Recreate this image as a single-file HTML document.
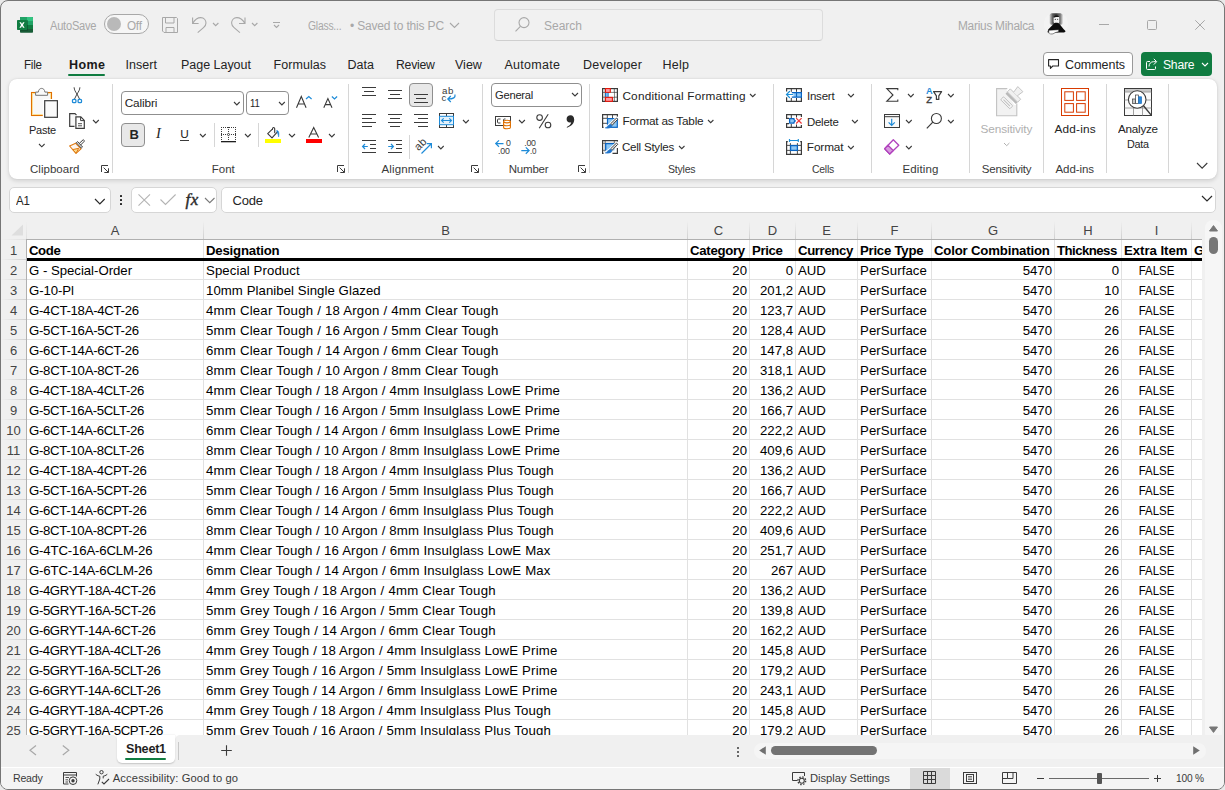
<!DOCTYPE html>
<html lang="en"><head><meta charset="utf-8"><title>Glass - Excel</title>
<style>
*{box-sizing:border-box;margin:0;padding:0}
html,body{width:1225px;height:790px;overflow:hidden;background:#e9e9e9}
body{font-family:"Liberation Sans",sans-serif;font-size:12px;color:#242424}
#win{position:absolute;left:0;top:0;width:1225px;height:790px;background:#f0f0f0;border:1px solid #767676;border-radius:8px;overflow:hidden}
#win>*{position:absolute}
.abs{position:absolute}
svg{position:absolute;overflow:visible}
.t{position:absolute;white-space:nowrap;line-height:1}
/* grid */
#grid{left:-1px;top:-1px;width:1225px;height:736px;overflow:hidden;pointer-events:none}
#grid>*{position:absolute}
#gridbg{left:26px;top:239px;width:1177px;height:496px;background:#fff}
.ch{top:221px;height:18px;line-height:19px;text-align:center;font-size:13px;color:#444}
.rh{left:1px;width:25px;height:19px;line-height:22px;text-align:center;font-size:13px;color:#444}
.vl{top:240px;width:1px;height:495px;background:#e1e1e1}
.vh{top:221px;width:1px;height:18px;background:linear-gradient(to bottom,rgba(208,208,208,0),#d0d0d0)}
.hl{left:27px;width:1175px;height:1px;background:#e1e1e1}
.hh{left:1px;width:25px;height:1px;background:linear-gradient(to right,rgba(208,208,208,0),#d0d0d0)}
.c{height:19px;line-height:22px;font-size:13.2px;color:#000;white-space:nowrap;overflow:hidden;padding:0 2px}
.c.ar{text-align:right}.c.ac{text-align:center}
.c.b{font-weight:bold;letter-spacing:-0.12px}
.k5{letter-spacing:0.1px}
.k8 span{display:inline-block;transform:scaleX(.87)}
#thick{left:27px;top:258px;width:1175px;height:3px;background:#000}
</style></head><body><div id="win">

<div class="abs" style="left:26px;top:239px;width:1175px;height:496px;background:#fff"></div>
<svg style="left:16px;top:16px" width="16" height="16">
<rect x="3" y="0" width="13" height="15.800" rx="0.800" fill="#185c37"/>
<path d="M3.800 0 H10 V4 H3 V0.800 A0.800 0.800 0 0 1 3.800 0 Z" fill="#21a366"/><path d="M10 0 H15.200 A0.800 0.800 0 0 1 16 0.800 V4 H10 Z" fill="#33c481"/>
<rect x="3" y="4" width="7" height="4" fill="#107c41"/><rect x="10" y="4" width="6" height="4" fill="#21a366"/>
<rect x="3" y="8" width="7" height="4" fill="#185c37"/><rect x="10" y="8" width="6" height="4" fill="#107c41"/>
<rect x="10" y="3" width="1" height="10.500" fill="#0b3f24" opacity="0.450"/><rect x="3.500" y="13" width="7" height="0.800" fill="#0b3f24" opacity="0.450"/>
<rect x="0" y="3" width="10" height="10" rx="0.800" fill="#107c41"/>
<path d="M2.400 5.200 L4 5.200 L5 7.100 L6 5.200 L7.600 5.200 L5.900 8 L7.600 10.800 L6 10.800 L5 8.900 L4 10.800 L2.400 10.800 L4.100 8 Z" fill="#fff"/>
</svg>
<div class="t" style="left:48.50px;top:14.84px;font-size:12px;line-height:20px;color:#a8a8a8;letter-spacing:-0.250px;transform:scaleX(0.9254);transform-origin:0 0;">AutoSave</div>
<div class="abs" style="left:103px;top:13px;width:45px;height:20px;border:1px solid #a8a8a8;border-radius:10px;background:#f6f6f6"></div>
<div class="abs" style="left:106px;top:16px;width:14px;height:14px;border-radius:7px;background:#b9b9b9"></div>
<div class="t" style="left:126.00px;top:14.84px;font-size:12px;line-height:20px;color:#a8a8a8;letter-spacing:-0.250px;transform:scaleX(0.9756);transform-origin:0 0;">Off</div>
<svg style="left:161px;top:16px" width="16" height="16"><path d="M0.500 0.500 H14.500 L15.500 1.500 V15.500 H2 L0.500 14 Z M3.500 0.500 V6 H12 V0.500 M4 15.500 V10.500 H12 V15.500" fill="none" stroke="#a8a8a8" stroke-width="1"/></svg>
<svg style="left:191px;top:16px" width="15" height="16"><path d="M0.600 0.500 V6.500 H6.600 M0.800 6.300 C3 2.500 6 0.600 8.800 0.600 C12 0.600 14 3.200 14 6 C14 8 13 9.300 11.500 10.600 L5.700 15.600" fill="none" stroke="#a8a8a8" stroke-width="1.100"/></svg>
<svg style="left:212.0px;top:21.8px" width="5.4" height="2.7"><path d="M0 0 L2.70 2.70 L5.40 0" fill="none" stroke="#a8a8a8" stroke-width="1.15"/></svg>
<svg style="left:230px;top:16px" width="15" height="16"><path d="M14 0.500 V6.500 H8 M13.800 6.300 C11.600 2.500 8.600 0.600 5.800 0.600 C2.600 0.600 0.600 3.200 0.600 6 C0.600 8 1.600 9.300 3.100 10.600 L8.900 15.600" fill="none" stroke="#a8a8a8" stroke-width="1.100"/></svg>
<svg style="left:251.0px;top:21.9px" width="5.4" height="2.7"><path d="M0 0 L2.70 2.70 L5.40 0" fill="none" stroke="#a8a8a8" stroke-width="1.15"/></svg>
<svg style="left:272px;top:21px" width="7" height="6"><path d="M0 0.500 H7" stroke="#a8a8a8" stroke-width="1"/><path d="M1 3 L3.500 5.500 L6 3" fill="none" stroke="#a8a8a8" stroke-width="1.100"/></svg>
<div class="t" style="left:306.50px;top:14.84px;font-size:12px;line-height:20px;color:#a8a8a8;letter-spacing:-0.250px;transform:scaleX(0.8617);transform-origin:0 0;">Glass...</div>
<div class="t" style="left:349.00px;top:14.84px;font-size:12px;line-height:20px;color:#a8a8a8;letter-spacing:-0.169px;">• Saved to this PC</div>
<svg style="left:449.0px;top:22.2px" width="9.0" height="4.5"><path d="M0 0 L4.50 4.50 L9.00 0" fill="none" stroke="#a8a8a8" stroke-width="1.1"/></svg>
<div class="abs" style="left:493px;top:8px;width:329px;height:32px;border:1px solid #dcdcdc;border-bottom-color:#cfcfcf;border-radius:4px;background:#f1f1f1"></div>
<svg style="left:514px;top:16px" width="15" height="15"><circle cx="9" cy="5.600" r="5" fill="none" stroke="#a8a8a8" stroke-width="1.100"/><path d="M5.400 9.300 L0.500 14.300" stroke="#a8a8a8" stroke-width="1.100"/></svg>
<div class="t" style="left:543.00px;top:14.84px;font-size:12px;line-height:20px;color:#a8a8a8;letter-spacing:0.000px;">Search</div>
<div class="t" style="left:957.00px;top:14.84px;font-size:12px;line-height:20px;color:#a8a8a8;letter-spacing:-0.250px;transform:scaleX(0.9871);transform-origin:0 0;">Marius Mihalca</div>
<svg style="left:1043px;top:11px" width="24" height="24"><defs><clipPath id="av"><circle cx="12" cy="12" r="12"/></clipPath>
<linearGradient id="avg" x1="0" x2="1" y1="0" y2="0"><stop offset="0" stop-color="#d8d8d8"/><stop offset="0.25" stop-color="#555"/><stop offset="0.5" stop-color="#3a3a3a"/><stop offset="0.8" stop-color="#777"/><stop offset="1" stop-color="#e0e0e0"/></linearGradient></defs>
<g clip-path="url(#av)"><rect width="24" height="24" fill="#f3f3f3"/>
<rect x="5.500" y="1.300" width="13.400" height="11.500" rx="2" fill="url(#avg)"/>
<rect x="9.600" y="4.200" width="5.600" height="7" rx="1.500" fill="#f2f2f2"/><path d="M9.600 5.800 C9.600 4 11 3.600 12.600 3.600 C14 3.600 15 4.200 15 5 L12 5 Z" fill="#111"/>
<circle cx="11.300" cy="7.300" r="0.650" fill="#333"/><circle cx="13.600" cy="7.300" r="0.600" fill="#555"/>
<path d="M9.500 12 L11 10.800 H13.500 L15.500 12 L19.500 17 L22.200 19.800 V20.600 H3.400 L4.200 17.500 Z" fill="#0c0c0c"/>
<path d="M4.600 18.300 L14.600 17.700 L14.800 19.600 L11 20.700 L9 21.900 L5 22.100 Z" fill="#fff" stroke="#111" stroke-width="0.500"/></g></svg>
<svg style="left:1098px;top:23px" width="10" height="1"><rect width="10" height="1" fill="#a8a8a8"/></svg>
<svg style="left:1146px;top:19px" width="10" height="10"><rect x="0.5" y="0.5" width="9" height="9" rx="1" fill="none" stroke="#a8a8a8" stroke-width="1"/></svg>
<svg style="left:1194px;top:19px" width="10" height="10"><path d="M0.3 0.3 L9.7 9.7 M9.7 0.3 L0.3 9.7" stroke="#a8a8a8" stroke-width="1"/></svg>
<div class="t" style="left:22.50px;top:54.17px;font-size:12.5px;line-height:20px;color:#242424;letter-spacing:-0.250px;transform:scaleX(0.9290);transform-origin:0 0;">File</div>
<div class="t" style="left:124.50px;top:54.17px;font-size:12.5px;line-height:20px;color:#242424;letter-spacing:0.050px;">Insert</div>
<div class="t" style="left:180.00px;top:54.17px;font-size:12.5px;line-height:20px;color:#242424;letter-spacing:-0.025px;">Page Layout</div>
<div class="t" style="left:272.50px;top:54.17px;font-size:12.5px;line-height:20px;color:#242424;letter-spacing:0.054px;">Formulas</div>
<div class="t" style="left:346.50px;top:54.17px;font-size:12.5px;line-height:20px;color:#242424;letter-spacing:0.000px;">Data</div>
<div class="t" style="left:395.00px;top:54.17px;font-size:12.5px;line-height:20px;color:#242424;letter-spacing:-0.250px;transform:scaleX(0.9781);transform-origin:0 0;">Review</div>
<div class="t" style="left:454.00px;top:54.17px;font-size:12.5px;line-height:20px;color:#242424;letter-spacing:0.000px;">View</div>
<div class="t" style="left:503.50px;top:54.17px;font-size:12.5px;line-height:20px;color:#242424;letter-spacing:0.286px;">Automate</div>
<div class="t" style="left:582.00px;top:54.17px;font-size:12.5px;line-height:20px;color:#242424;letter-spacing:0.250px;">Developer</div>
<div class="t" style="left:661.50px;top:54.17px;font-size:12.5px;line-height:20px;color:#242424;letter-spacing:0.250px;">Help</div>
<div class="t" style="left:68.00px;top:54.17px;font-size:12.5px;line-height:20px;color:#1a1a1a;letter-spacing:0.417px;font-weight:bold;">Home</div>
<div class="abs" style="left:67px;top:73px;width:37px;height:2px;background:#107c41;border-radius:1px"></div>
<div class="abs" style="left:1042px;top:51px;width:90px;height:24px;border:1px solid #999;border-radius:4px;background:#fff"></div>
<svg style="left:1047px;top:57px" width="11" height="11"><path d="M0.600 1.600 H10.500 V8 H4.800 L2.400 10.300 V8 H0.600 Z" fill="none" stroke="#242424" stroke-width="1.100" stroke-linejoin="round"/></svg>
<div class="t" style="left:1064.00px;top:53.87px;font-size:12.5px;line-height:20px;color:#242424;letter-spacing:-0.054px;">Comments</div>
<div class="abs" style="left:1140px;top:51px;width:71px;height:24px;border-radius:4px;background:#107c41"></div>
<svg style="left:1145px;top:57px" width="11" height="12"><path d="M4 3.5 H1.5 A1 1 0 0 0 0.5 4.5 V10.5 A1 1 0 0 0 1.5 11.5 H8.5 A1 1 0 0 0 9.5 10.5 V8.5" fill="none" stroke="#fff" stroke-width="1"/><path d="M3 8.5 C3 5.5 5 3.7 7.5 3.7 H10 M7.8 0.8 L10.7 3.7 L7.8 6.6" fill="none" stroke="#fff" stroke-width="1"/></svg>
<div class="t" style="left:1161.50px;top:53.87px;font-size:12.5px;line-height:20px;color:#fff;letter-spacing:-0.250px;transform:scaleX(0.9730);transform-origin:0 0;">Share</div>
<svg style="left:1201.0px;top:62.0px" width="6.0" height="3.0"><path d="M0 0 L3.00 3.00 L6.00 0" fill="none" stroke="#fff" stroke-width="1.1"/></svg>
<div class="abs" style="left:8px;top:78px;width:1207.5px;height:100px;background:#fff;border-radius:8px;box-shadow:0 1.5px 4px rgba(0,0,0,.13),0 0 1.5px rgba(0,0,0,.10)"></div>
<svg style="left:30px;top:87px" width="27" height="30">
<rect x="0.500" y="4.500" width="20" height="23" fill="#f8f8f8" stroke="#e07000" stroke-width="1.100"/>
<rect x="1.500" y="5.500" width="18" height="21" fill="none" stroke="#fbe09a" stroke-width="1"/>
<rect x="11.800" y="11" width="16" height="19" fill="#fff"/>
<path d="M4.600 7.300 V4.100 H7.300 C7.600 1.500 9 0.400 10.600 0.400 C12.200 0.400 13.600 1.500 13.900 4.100 H16.600 V7.300 Z" fill="#fafafa" stroke="#757575" stroke-width="1"/>
<rect x="13.700" y="12.700" width="12.700" height="16.600" fill="#fafafa" stroke="#3b3b3b" stroke-width="1.200"/>
</svg>
<div class="t" style="left:27.80px;top:118.91px;font-size:11.8px;line-height:20px;color:#242424;letter-spacing:-0.250px;transform:scaleX(0.9339);transform-origin:0 0;">Paste</div>
<svg style="left:38.0px;top:143.1px" width="5.6" height="2.8"><path d="M0 0 L2.80 2.80 L5.60 0" fill="none" stroke="#3b3b3b" stroke-width="1.1"/></svg>
<svg style="left:71px;top:86px" width="11" height="16"><path d="M2.100 0.300 C2.300 3 3.300 4.500 5 7 L7.500 12 M7.900 0.300 C7.700 3 6.700 4.500 5 7 L2.500 12" stroke="#3b3b3b" stroke-width="0.950" fill="none"/>
<rect x="0.500" y="12.300" width="3.400" height="3.400" rx="1" fill="#fff" stroke="#1e8bd8" stroke-width="1.300"/><rect x="6.100" y="12.300" width="3.400" height="3.400" rx="1" fill="#fff" stroke="#1e8bd8" stroke-width="1.300"/></svg>
<svg style="left:68px;top:112px" width="17" height="17"><path d="M5.500 13.300 H0.700 V0.700 H6 L7.500 2.200" fill="#f8f8f8" stroke="#3b3b3b" stroke-width="1.200"/>
<path d="M6.900 3.900 H11.800 L15.300 7.400 V15.300 H6.900 Z" fill="#fff" stroke="#3b3b3b" stroke-width="1.200"/>
<path d="M11.600 4.100 V7.600 H15.100" fill="none" stroke="#3b3b3b" stroke-width="1"/><path d="M9 10.700 H13 M9 12.800 H13" fill="none" stroke="#3b3b3b" stroke-width="0.900"/></svg>
<svg style="left:91.7px;top:119.0px" width="5.8" height="2.9"><path d="M0 0 L2.90 2.90 L5.80 0" fill="none" stroke="#3b3b3b" stroke-width="1.1"/></svg>
<svg style="left:68px;top:138px" width="17" height="15"><path d="M0.600 7 L6.700 4.300 L12 9.800 L7 14.400 Z" fill="#fdf5ee" stroke="#e07a10" stroke-width="1.100" stroke-linejoin="round"/>
<path d="M3.600 10.600 L9.800 9.300 L7 14.200 Z" fill="#fbd98a" stroke="#e07a10" stroke-width="1" stroke-linejoin="round"/>
<path d="M7.300 3.700 L8.600 2.600 L13.500 8 L12.300 9.100 Z" fill="#fff" stroke="#3b3b3b" stroke-width="1" stroke-linejoin="round"/>
<path d="M10.300 4.400 L14.200 0.700 L15.600 2 L11.700 5.900 Z" fill="#fff" stroke="#3b3b3b" stroke-width="1" stroke-linejoin="round"/></svg>
<div class="t" style="left:29.00px;top:157.52px;font-size:11.5px;line-height:20px;color:#3a3a3a;letter-spacing:0.031px;">Clipboard</div>
<svg style="left:100px;top:164px" width="8" height="8"><path d="M7 0.500 H0.500 V7 M2.600 2.600 L7.300 7.300 M7.500 3.300 V7.500 H3.300" fill="none" stroke="#3b3b3b" stroke-width="1"/></svg>
<div class="abs" style="left:111px;top:83px;width:1px;height:89px;background:#d6d6d6"></div>
<div class="abs" style="left:120px;top:90px;width:123px;height:24px;border:1px solid #8f8f8f;border-radius:4px;background:#fff"></div>
<div class="t" style="left:123.70px;top:91.91px;font-size:11.8px;line-height:20px;color:#242424;letter-spacing:-0.117px;">Calibri</div>
<svg style="left:233.3px;top:100.8px" width="5.7" height="2.8"><path d="M0 0 L2.85 2.85 L5.70 0" fill="none" stroke="#3b3b3b" stroke-width="1.1"/></svg>
<div class="abs" style="left:245px;top:90px;width:43px;height:24px;border:1px solid #8f8f8f;border-radius:4px;background:#fff"></div>
<div class="t" style="left:249.30px;top:91.91px;font-size:11.8px;line-height:20px;color:#242424;letter-spacing:-0.250px;transform:scaleX(0.8083);transform-origin:0 0;">11</div>
<svg style="left:278.4px;top:100.8px" width="5.8" height="2.9"><path d="M0 0 L2.90 2.90 L5.80 0" fill="none" stroke="#3b3b3b" stroke-width="1.1"/></svg>
<svg style="left:295px;top:95px" width="16" height="12"><path d="M0.500 11.800 L5.300 0.500 L10.100 11.800 M2.200 8 H8.400" fill="none" stroke="#3b3b3b" stroke-width="1.100"/><path d="M10 3 L12.800 0.500 L15.600 3" fill="none" stroke="#1e8bd8" stroke-width="1.200"/></svg>
<svg style="left:322px;top:95px" width="15" height="12"><path d="M0.800 11.800 L4.900 2.600 L9 11.800 M2.300 8.600 H7.500" fill="none" stroke="#3b3b3b" stroke-width="1.100"/><path d="M8.900 0.500 L11.500 3 L14.100 0.500" fill="none" stroke="#1e8bd8" stroke-width="1.200"/></svg>
<div class="abs" style="left:120px;top:122px;width:24px;height:24px;border:1px solid #8f8f8f;border-radius:4px;background:#e8e8e8"></div>
<div class="t" style="left:128.60px;top:123.50px;font-size:13px;line-height:20px;color:#242424;letter-spacing:0.000px;font-weight:bold;">B</div>
<div class="t" style="left:155px;top:122.3px;font-family:'Liberation Serif',serif;font-style:italic;font-size:14.5px;line-height:20px;color:#242424">I</div>
<div class="t" style="left:179.30px;top:122.51px;font-size:11.8px;line-height:20px;color:#242424;letter-spacing:0.000px;">U</div>
<div class="abs" style="left:179px;top:139px;width:9px;height:1px;background:#3b3b3b"></div>
<svg style="left:199.4px;top:132.8px" width="5.7" height="2.8"><path d="M0 0 L2.85 2.85 L5.70 0" fill="none" stroke="#3b3b3b" stroke-width="1.1"/></svg>
<div class="abs" style="left:213px;top:122px;width:1px;height:24px;background:#d6d6d6"></div>
<svg style="left:220px;top:126px" width="15" height="16"><path d="M0 0.500 H15 M0 7.500 H15 M0.500 0 V14 M7.500 0 V14 M14.500 0 V14" fill="none" stroke="#3b3b3b" stroke-width="1" stroke-dasharray="1 1"/>
<circle cx="7.500" cy="7.500" r="1.100" fill="#fff" stroke="#3b3b3b" stroke-width="0.700"/>
<rect x="0" y="14" width="15" height="1.300" fill="#1f1f1f"/></svg>
<svg style="left:243.5px;top:132.8px" width="5.7" height="2.8"><path d="M0 0 L2.85 2.85 L5.70 0" fill="none" stroke="#3b3b3b" stroke-width="1.1"/></svg>
<div class="abs" style="left:257px;top:122px;width:1px;height:24px;background:#d6d6d6"></div>
<svg style="left:265px;top:126px" width="15" height="12"><path d="M6.400 2.200 L1.700 6.600 L6 10.800 L11 5.400" fill="#fafafa" stroke="#3b3b3b" stroke-width="1.150" stroke-linejoin="round" stroke-linecap="round"/>
<path d="M6.400 2.400 C6.300 0.200 8.700 -0.200 8.700 1.900 V5.600" fill="none" stroke="#3b3b3b" stroke-width="1.150" stroke-linecap="round"/>
<path d="M10.500 3.700 C12.600 3 13.400 6.500 12.600 9.900 C12.300 7.800 11.700 5.800 10.500 3.700 Z" fill="#0f6cbd" stroke="#1e8bd8" stroke-width="0.600"/></svg>
<div class="abs" style="left:264px;top:138px;width:16px;height:4px;background:#ffff00"></div>
<svg style="left:287.6px;top:132.7px" width="6.0" height="3.0"><path d="M0 0 L3.00 3.00 L6.00 0" fill="none" stroke="#3b3b3b" stroke-width="1.1"/></svg>
<svg style="left:307px;top:126px" width="12" height="11"><path d="M0.800 10.400 L5.700 0.500 L10.600 10.400 M2.600 7 H8.800" fill="none" stroke="#3b3b3b" stroke-width="1.100"/></svg>
<div class="abs" style="left:305px;top:138px;width:16px;height:4px;background:#ff0000"></div>
<svg style="left:328.3px;top:132.8px" width="5.7" height="2.8"><path d="M0 0 L2.85 2.85 L5.70 0" fill="none" stroke="#3b3b3b" stroke-width="1.1"/></svg>
<div class="t" style="left:210.80px;top:157.52px;font-size:11.5px;line-height:20px;color:#3a3a3a;letter-spacing:0.000px;">Font</div>
<svg style="left:336px;top:164px" width="8" height="8"><path d="M7 0.500 H0.500 V7 M2.600 2.600 L7.300 7.300 M7.500 3.300 V7.500 H3.300" fill="none" stroke="#3b3b3b" stroke-width="1"/></svg>
<div class="abs" style="left:347px;top:83px;width:1px;height:89px;background:#d6d6d6"></div>
<div class="abs" style="left:361px;top:86px;width:14px;height:1px;background:#3b3b3b"></div><div class="abs" style="left:363px;top:90px;width:10px;height:1px;background:#3b3b3b"></div><div class="abs" style="left:361px;top:94px;width:14px;height:1px;background:#3b3b3b"></div>
<div class="abs" style="left:387px;top:89px;width:14px;height:1px;background:#3b3b3b"></div><div class="abs" style="left:389px;top:93px;width:10px;height:1px;background:#3b3b3b"></div><div class="abs" style="left:387px;top:97px;width:14px;height:1px;background:#3b3b3b"></div>
<div class="abs" style="left:408px;top:82px;width:24px;height:24px;border:1px solid #8f8f8f;border-radius:4px;background:#e8e8e8"></div>
<div class="abs" style="left:413px;top:93px;width:14px;height:1px;background:#3b3b3b"></div><div class="abs" style="left:415px;top:97px;width:10px;height:1px;background:#3b3b3b"></div><div class="abs" style="left:413px;top:101px;width:14px;height:1px;background:#3b3b3b"></div>
<div class="t" style="left:440.50px;top:79.91px;font-size:9.5px;line-height:20px;color:#3b3b3b;letter-spacing:0.600px;transform:scaleX(1.0245);transform-origin:0 0;">ab</div>
<div class="t" style="left:440.50px;top:87.31px;font-size:9.5px;line-height:20px;color:#3b3b3b;letter-spacing:0.000px;">c</div>
<svg style="left:446px;top:93px" width="9" height="9"><path d="M8 0.500 C8.600 3.500 6.500 5 1 5 M3.800 2 L0.800 5 L3.800 8" fill="none" stroke="#1e8bd8" stroke-width="1.200"/></svg>
<div class="abs" style="left:361px;top:113px;width:14px;height:1px;background:#3b3b3b"></div><div class="abs" style="left:361px;top:117px;width:10px;height:1px;background:#3b3b3b"></div><div class="abs" style="left:361px;top:121px;width:14px;height:1px;background:#3b3b3b"></div><div class="abs" style="left:361px;top:125px;width:10px;height:1px;background:#3b3b3b"></div>
<div class="abs" style="left:387px;top:113px;width:14px;height:1px;background:#3b3b3b"></div><div class="abs" style="left:389px;top:117px;width:10px;height:1px;background:#3b3b3b"></div><div class="abs" style="left:387px;top:121px;width:14px;height:1px;background:#3b3b3b"></div><div class="abs" style="left:389px;top:125px;width:10px;height:1px;background:#3b3b3b"></div>
<div class="abs" style="left:413px;top:113px;width:14px;height:1px;background:#3b3b3b"></div><div class="abs" style="left:417px;top:117px;width:10px;height:1px;background:#3b3b3b"></div><div class="abs" style="left:413px;top:121px;width:14px;height:1px;background:#3b3b3b"></div><div class="abs" style="left:417px;top:125px;width:10px;height:1px;background:#3b3b3b"></div>
<svg style="left:438px;top:112px" width="15" height="15"><rect x="0.500" y="0.500" width="14" height="14" fill="#fff" stroke="#3b3b3b" stroke-width="1"/>
<path d="M7.500 0.500 V3 M7.500 12 V14.500" stroke="#3b3b3b" stroke-width="1"/>
<rect x="0.500" y="3.300" width="14" height="8.400" fill="#e3f1fb" stroke="#1e8bd8" stroke-width="1"/>
<path d="M2.500 7.500 H12.500 M4.700 5.300 L2.500 7.500 L4.700 9.700 M10.300 5.300 L12.500 7.500 L10.300 9.700" fill="none" stroke="#1e8bd8" stroke-width="1.100"/></svg>
<svg style="left:461.6px;top:119.0px" width="5.8" height="2.9"><path d="M0 0 L2.90 2.90 L5.80 0" fill="none" stroke="#3b3b3b" stroke-width="1.1"/></svg>
<div class="abs" style="left:361px;top:139px;width:14px;height:1px;background:#3b3b3b"></div><div class="abs" style="left:369px;top:143px;width:6px;height:1px;background:#3b3b3b"></div><div class="abs" style="left:369px;top:147px;width:6px;height:1px;background:#3b3b3b"></div><div class="abs" style="left:361px;top:151px;width:14px;height:1px;background:#3b3b3b"></div>
<svg style="left:361px;top:142px" width="6" height="7"><path d="M0.600 3.500 H5.800 M3 1 L0.600 3.500 L3 6" fill="none" stroke="#1e8bd8" stroke-width="1.200"/></svg>
<div class="abs" style="left:387px;top:139px;width:14px;height:1px;background:#3b3b3b"></div><div class="abs" style="left:395px;top:143px;width:6px;height:1px;background:#3b3b3b"></div><div class="abs" style="left:395px;top:147px;width:6px;height:1px;background:#3b3b3b"></div><div class="abs" style="left:387px;top:151px;width:14px;height:1px;background:#3b3b3b"></div>
<svg style="left:387px;top:142px" width="6" height="7"><path d="M0.200 3.500 H5.400 M3 1 L5.400 3.500 L3 6" fill="none" stroke="#1e8bd8" stroke-width="1.200"/></svg>
<div class="abs" style="left:408px;top:134px;width:1px;height:24px;background:#d6d6d6"></div>
<div class="t" style="left:413.3px;top:137px;font-size:11px;line-height:12px;color:#3b3b3b;transform:rotate(-45deg);transform-origin:50% 50%">ab</div>
<svg style="left:420px;top:142px" width="11" height="11"><path d="M0.500 10.500 L10.300 0.800 M5.800 0.600 H10.400 V5.200" fill="none" stroke="#1e8bd8" stroke-width="1.200"/></svg>
<svg style="left:436.8px;top:145.2px" width="5.7" height="2.8"><path d="M0 0 L2.85 2.85 L5.70 0" fill="none" stroke="#3b3b3b" stroke-width="1.1"/></svg>
<div class="t" style="left:380.50px;top:157.52px;font-size:11.5px;line-height:20px;color:#3a3a3a;letter-spacing:0.134px;">Alignment</div>
<svg style="left:470px;top:164px" width="8" height="8"><path d="M7 0.500 H0.500 V7 M2.600 2.600 L7.300 7.300 M7.500 3.300 V7.500 H3.300" fill="none" stroke="#3b3b3b" stroke-width="1"/></svg>
<div class="abs" style="left:481px;top:83px;width:1px;height:89px;background:#d6d6d6"></div>
<div class="abs" style="left:490px;top:82px;width:91px;height:24px;border:1px solid #8f8f8f;border-radius:4px;background:#fff"></div>
<div class="t" style="left:493.90px;top:83.91px;font-size:11.8px;line-height:20px;color:#242424;letter-spacing:-0.250px;transform:scaleX(0.9457);transform-origin:0 0;">General</div>
<svg style="left:571.4px;top:92.4px" width="6.0" height="3.0"><path d="M0 0 L3.00 3.00 L6.00 0" fill="none" stroke="#3b3b3b" stroke-width="1.1"/></svg>
<svg style="left:494px;top:115px" width="17" height="14"><rect x="0.500" y="0.500" width="15" height="9" fill="#fff" stroke="#3b3b3b" stroke-width="1"/>
<path d="M5.500 3 H3.500 A1 1 0 0 0 2.500 4 V6 A1 1 0 0 0 3.500 7 H5.500 M8.500 7 V4 A1 1 0 0 1 9.500 3 H10.500" fill="none" stroke="#3b3b3b" stroke-width="1"/>
<path d="M8.600 5.500 V11.500 A3.400 1.300 0 0 0 15.400 11.500 V5.500" fill="#fff" stroke="#e07000" stroke-width="1.100"/>
<ellipse cx="12" cy="5.600" rx="3.400" ry="1.300" fill="#fff" stroke="#e07000" stroke-width="1.100"/>
<path d="M8.600 8.500 A3.400 1.300 0 0 0 15.400 8.500" fill="none" stroke="#e07000" stroke-width="1.100"/></svg>
<svg style="left:517.6px;top:118.9px" width="5.9" height="2.9"><path d="M0 0 L2.95 2.95 L5.90 0" fill="none" stroke="#3b3b3b" stroke-width="1.1"/></svg>
<svg style="left:535px;top:113px" width="16" height="15"><circle cx="3.600" cy="3.600" r="2.800" fill="none" stroke="#3b3b3b" stroke-width="1.100"/><circle cx="12" cy="11" r="2.800" fill="none" stroke="#3b3b3b" stroke-width="1.100"/><path d="M12.200 0.300 L3.200 14.300" stroke="#3b3b3b" stroke-width="1.100"/></svg>
<svg style="left:565px;top:114px" width="9" height="13"><path d="M4.600 0.200 C6.800 0.200 8.200 1.800 8.200 4.500 C8.200 8.300 5.500 11.300 1 12.700 L0.700 12 C3.400 10.800 4.800 9.300 5.200 7.300 C4.700 7.500 4.400 7.500 3.900 7.500 C1.900 7.500 0.600 6 0.600 4 C0.600 1.800 2.300 0.200 4.600 0.200 Z" fill="#2b2b2b"/></svg>
<svg style="left:494px;top:139px" width="9" height="8"><path d="M0.700 3.600 H8.500 M4 0.400 L0.700 3.600 L4 6.800" fill="none" stroke="#1e8bd8" stroke-width="1.200"/></svg>
<div class="t" style="left:505.00px;top:131.75px;font-size:8.8px;line-height:20px;color:#3b3b3b;letter-spacing:0.000px;">0</div>
<div class="t" style="left:497.00px;top:139.95px;font-size:8.8px;line-height:20px;color:#3b3b3b;letter-spacing:-0.125px;">.00</div>
<div class="t" style="left:523.20px;top:131.75px;font-size:8.8px;line-height:20px;color:#3b3b3b;letter-spacing:-0.225px;">.00</div>
<svg style="left:520px;top:146px" width="9" height="8"><path d="M0.300 3.600 H8.100 M4.800 0.400 L8.100 3.600 L4.800 6.800" fill="none" stroke="#1e8bd8" stroke-width="1.200"/></svg>
<div class="t" style="left:528.50px;top:139.95px;font-size:8.8px;line-height:20px;color:#3b3b3b;letter-spacing:-0.250px;transform:scaleX(0.9123);transform-origin:0 0;">.0</div>
<div class="t" style="left:507.70px;top:157.52px;font-size:11.5px;line-height:20px;color:#3a3a3a;letter-spacing:-0.195px;">Number</div>
<svg style="left:577px;top:164px" width="8" height="8"><path d="M7 0.500 H0.500 V7 M2.600 2.600 L7.300 7.300 M7.500 3.300 V7.500 H3.300" fill="none" stroke="#3b3b3b" stroke-width="1"/></svg>
<div class="abs" style="left:588px;top:83px;width:1px;height:89px;background:#d6d6d6"></div>
<svg style="left:601px;top:87px" width="16" height="14"><rect x="0.600" y="0.600" width="14.800" height="12.800" fill="#fff" stroke="#3b3b3b" stroke-width="1.200"/>
<path d="M3.200 0.500 V13.500 M12.300 0.500 V13.500 M0.500 4.400 H15.500 M0.500 9.200 H15.500" stroke="#3b3b3b" stroke-width="0.900" fill="none" opacity="0.800"/>
<rect x="3.500" y="0.550" width="4.800" height="3.900" fill="#ff9aa2" stroke="#e3170a" stroke-width="1.100"/>
<rect x="3.100" y="4.900" width="3.600" height="3.900" fill="#0b6fc9"/><rect x="4.200" y="4.900" width="1.400" height="3.900" fill="#8fd0ff"/>
<rect x="6.900" y="4.900" width="5" height="3.900" fill="#fff"/>
<rect x="3.500" y="9.350" width="6.900" height="4" fill="#ff9aa2" stroke="#e3170a" stroke-width="1.100"/></svg>
<div class="t" style="left:621.40px;top:84.51px;font-size:11.8px;line-height:20px;color:#242424;letter-spacing:0.212px;">Conditional Formatting</div>
<svg style="left:749.2px;top:93.1px" width="5.5" height="2.8"><path d="M0 0 L2.75 2.75 L5.50 0" fill="none" stroke="#3b3b3b" stroke-width="1.1"/></svg>
<svg style="left:601px;top:113px" width="16" height="15"><path d="M0.600 14 V0.600 H15.400 V3.300 M0.600 13.400 H1.600" fill="none" stroke="#3b3b3b" stroke-width="1.200"/>
<path d="M0.500 4.300 H5 M0.500 9.300 H5 M5.300 0.500 V4 M10.500 0.500 V4" fill="none" stroke="#3b3b3b" stroke-width="0.900"/>
<rect x="5.500" y="4.600" width="9.800" height="8.700" fill="#8ec8f5" stroke="#0a64c2" stroke-width="1.200"/>
<g transform="translate(0 0)"><path d="M17 2.800 L7.500 13 L2.500 15.300 L1.800 13.500 L7 9.500 L14.500 2.500 Z" fill="#fff"/>
<path d="M15.700 5.300 L14.500 4.100 L8.500 9.900 L10 11.400 Z" fill="#fff" stroke="#3b3b3b" stroke-width="1" stroke-linejoin="round"/>
<path d="M13.800 6 L14.300 6.500 M12.600 7.200 L13.100 7.700 M11.400 8.400 L11.900 8.900 M10.200 9.600 L10.700 10.100" stroke="#3b3b3b" stroke-width="0.500"/>
<path d="M8.300 10 L10.100 11.700 C9.600 13.900 7 14.800 3 13.900 C5.500 13.300 5.800 11 8.300 10 Z" fill="#1f74cc" stroke="#1f74cc" stroke-width="0.400"/></g></svg>
<div class="t" style="left:621.40px;top:110.31px;font-size:11.8px;line-height:20px;color:#242424;letter-spacing:-0.220px;">Format as Table</div>
<svg style="left:707.3px;top:119.0px" width="5.4" height="2.7"><path d="M0 0 L2.70 2.70 L5.40 0" fill="none" stroke="#3b3b3b" stroke-width="1.1"/></svg>
<svg style="left:601px;top:139px" width="16" height="15"><path d="M0.600 14 V0.600 H15.400 V2.600 M15.400 8 V13.400 H10.500 M0.600 13.400 H1.600" fill="none" stroke="#3b3b3b" stroke-width="1.200"/>
<path d="M3.200 0.500 V13.500 M12.300 0.500 V3.300 M0.500 3.300 H15.500 M0.500 10.300 H3.200" fill="none" stroke="#3b3b3b" stroke-width="0.700"/>
<rect x="3.600" y="3.700" width="8.900" height="6.800" fill="#8ec8f5"/><path d="M3.700 10.500 V3.700 H12.500" fill="none" stroke="#0a64c2" stroke-width="1.300"/>
<g transform="translate(0 -1)"><path d="M17 2.800 L7.500 13 L2.500 15.300 L1.800 13.500 L7 9.500 L14.500 2.500 Z" fill="#fff"/>
<path d="M15.700 5.300 L14.500 4.100 L8.500 9.900 L10 11.400 Z" fill="#fff" stroke="#3b3b3b" stroke-width="1" stroke-linejoin="round"/>
<path d="M13.800 6 L14.300 6.500 M12.600 7.200 L13.100 7.700 M11.400 8.400 L11.900 8.900 M10.200 9.600 L10.700 10.100" stroke="#3b3b3b" stroke-width="0.500"/>
<path d="M8.300 10 L10.100 11.700 C9.600 13.900 7 14.800 3 13.900 C5.500 13.300 5.800 11 8.300 10 Z" fill="#1f74cc" stroke="#1f74cc" stroke-width="0.400"/></g></svg>
<div class="t" style="left:621.40px;top:136.41px;font-size:11.8px;line-height:20px;color:#242424;letter-spacing:-0.250px;transform:scaleX(0.9803);transform-origin:0 0;">Cell Styles</div>
<svg style="left:677.8px;top:145.0px" width="5.5" height="2.8"><path d="M0 0 L2.75 2.75 L5.50 0" fill="none" stroke="#3b3b3b" stroke-width="1.1"/></svg>
<div class="t" style="left:666.70px;top:157.52px;font-size:11.5px;line-height:20px;color:#3a3a3a;letter-spacing:-0.250px;transform:scaleX(0.9162);transform-origin:0 0;">Styles</div>
<div class="abs" style="left:772px;top:83px;width:1px;height:89px;background:#d6d6d6"></div>
<svg style="left:785px;top:87px" width="16" height="14"><path d="M0.600 3.400 V0.600 H15.400 V13.400 H0.600 V9.200" fill="none" stroke="#3b3b3b" stroke-width="1.200"/>
<path d="M5.300 0.500 V3.800 M10.500 0.500 V3.800 M5.300 10 V13.500 M10.500 10 V13.500" fill="none" stroke="#3b3b3b" stroke-width="1"/>
<rect x="7.500" y="4.600" width="8" height="4.600" fill="#8ec8f5"/>
<path d="M5.800 4.600 H16 M5.800 9.100 H16 M10.500 4.600 V9.100 M15.400 4 V9.700" fill="none" stroke="#0a64c2" stroke-width="1.200"/>
<path d="M0.500 6.500 H6.600 M3.500 3.500 L0.500 6.500 L3.500 9.500" fill="none" stroke="#1e90d8" stroke-width="1.200" stroke-linecap="round"/></svg>
<div class="t" style="left:805.80px;top:84.51px;font-size:11.8px;line-height:20px;color:#242424;letter-spacing:-0.250px;transform:scaleX(0.9770);transform-origin:0 0;">Insert</div>
<svg style="left:846.6px;top:92.9px" width="5.9" height="2.9"><path d="M0 0 L2.95 2.95 L5.90 0" fill="none" stroke="#3b3b3b" stroke-width="1.1"/></svg>
<svg style="left:785px;top:113px" width="16" height="14"><path d="M3 4.300 H0.600 V0.600 H15.400 V3 M3 9.700 H0.600 V13.400 H15.400 V11" fill="none" stroke="#3b3b3b" stroke-width="1.200"/>
<path d="M5.300 0.500 V4 M10.500 0.500 V3.500 M5.300 10 V13.500 M10.500 10.500 V13.500" fill="none" stroke="#3b3b3b" stroke-width="1"/>
<path d="M3.600 4.700 H8 V5.600 L9.300 6.900 L8 8.200 V9.100 H3.600 Z" fill="#8ec8f5" stroke="#0a64c2" stroke-width="1.300" stroke-linejoin="round"/>
<path d="M10.200 4.100 L15.600 9.500 M15.600 4.100 L10.200 9.500" stroke="#f03a3a" stroke-width="1.200"/></svg>
<div class="t" style="left:805.80px;top:110.51px;font-size:11.8px;line-height:20px;color:#242424;letter-spacing:-0.250px;transform:scaleX(0.9673);transform-origin:0 0;">Delete</div>
<svg style="left:850.8px;top:119.0px" width="5.8" height="2.9"><path d="M0 0 L2.90 2.90 L5.80 0" fill="none" stroke="#3b3b3b" stroke-width="1.1"/></svg>
<svg style="left:785px;top:138px" width="16" height="16"><path d="M3.500 1.500 H12.300 M3.500 0 V3 M12.300 0 V3" fill="none" stroke="#1e90d8" stroke-width="1.200"/>
<path d="M1.800 2.700 H0.600 V15.400 H15.400 V2.700 H14.200" fill="none" stroke="#3b3b3b" stroke-width="1.200"/>
<path d="M0.500 6.400 H15.500 M0.500 11.400 H15.500 M4.400 4.100 V15.500 M11.400 4.100 V15.500" fill="none" stroke="#3b3b3b" stroke-width="0.900"/>
<rect x="4.600" y="6.600" width="6.800" height="4.800" fill="#8ec8f5" stroke="#0a64c2" stroke-width="1.300"/></svg>
<div class="t" style="left:805.80px;top:136.31px;font-size:11.8px;line-height:20px;color:#242424;letter-spacing:-0.115px;">Format</div>
<svg style="left:846.8px;top:144.7px" width="5.8" height="2.9"><path d="M0 0 L2.90 2.90 L5.80 0" fill="none" stroke="#3b3b3b" stroke-width="1.1"/></svg>
<div class="t" style="left:811.00px;top:157.52px;font-size:11.5px;line-height:20px;color:#3a3a3a;letter-spacing:-0.250px;transform:scaleX(0.9061);transform-origin:0 0;">Cells</div>
<div class="abs" style="left:870px;top:83px;width:1px;height:89px;background:#d6d6d6"></div>
<svg style="left:885px;top:87px" width="13" height="14"><path d="M11.800 2.300 V0.600 H0.800 L7 7 L0.800 13.300 H11.800 V11.600" fill="none" stroke="#3b3b3b" stroke-width="1.100" stroke-linejoin="miter"/></svg>
<svg style="left:906.6px;top:93.1px" width="5.7" height="2.8"><path d="M0 0 L2.85 2.85 L5.70 0" fill="none" stroke="#3b3b3b" stroke-width="1.1"/></svg>
<div class="t" style="left:925.00px;top:79.61px;font-size:9.2px;line-height:20px;color:#1e8bd8;letter-spacing:0.000px;font-weight:bold;">A</div>
<div class="t" style="left:925.20px;top:88.57px;font-size:9.6px;line-height:20px;color:#3b3b3b;letter-spacing:0.000px;-webkit-text-stroke:0.3px #3b3b3b;">Z</div>
<svg style="left:932px;top:90px" width="10" height="9"><path d="M0.600 0.600 H8.600 L5.800 4.800 V8.400 H3.400 V4.800 Z" fill="none" stroke="#3b3b3b" stroke-width="1.200" stroke-linejoin="round"/></svg>
<svg style="left:946.7px;top:93.1px" width="5.7" height="2.8"><path d="M0 0 L2.85 2.85 L5.70 0" fill="none" stroke="#3b3b3b" stroke-width="1.1"/></svg>
<svg style="left:883px;top:113px" width="16" height="14"><rect x="0.500" y="0.500" width="15" height="13" fill="#fafafa" stroke="#3b3b3b" stroke-width="1"/><path d="M0.500 2.700 H15.500" stroke="#3b3b3b" stroke-width="1"/><path d="M7.700 4.800 V11.400 M4.600 8.400 L7.700 11.500 L10.800 8.400" fill="none" stroke="#1e8bd8" stroke-width="1.200"/></svg>
<svg style="left:904.7px;top:119.0px" width="5.7" height="2.8"><path d="M0 0 L2.85 2.85 L5.70 0" fill="none" stroke="#3b3b3b" stroke-width="1.1"/></svg>
<svg style="left:925px;top:112px" width="17" height="16"><circle cx="10.400" cy="5.500" r="5" fill="none" stroke="#3b3b3b" stroke-width="1.100"/><path d="M6.800 9.200 L0.800 15.300" stroke="#3b3b3b" stroke-width="1.200"/></svg>
<svg style="left:946.7px;top:119.0px" width="5.7" height="2.8"><path d="M0 0 L2.85 2.85 L5.70 0" fill="none" stroke="#3b3b3b" stroke-width="1.1"/></svg>
<svg style="left:883px;top:138px" width="16" height="16"><path d="M9.300 0.800 L14.800 6.200 L5.700 15 L0.700 9.800 Z" fill="#fff" stroke="#b143bd" stroke-width="1.300" stroke-linejoin="round"/>
<path d="M4 6.300 L9.200 11.500 L5.700 15 L0.700 9.800 Z" fill="#d79ade" stroke="#b143bd" stroke-width="1.300" stroke-linejoin="round"/></svg>
<svg style="left:904.7px;top:145.0px" width="5.7" height="2.8"><path d="M0 0 L2.85 2.85 L5.70 0" fill="none" stroke="#3b3b3b" stroke-width="1.1"/></svg>
<div class="t" style="left:901.50px;top:157.52px;font-size:11.5px;line-height:20px;color:#3a3a3a;letter-spacing:0.129px;">Editing</div>
<div class="abs" style="left:968px;top:83px;width:1px;height:89px;background:#d6d6d6"></div>
<svg style="left:995px;top:86px" width="28" height="30"><rect x="0.600" y="1.600" width="20.200" height="27.100" fill="#f2f2f2"/>
<path d="M9 0 L22 0 L22 18 L18 18 Z" fill="#fff"/>
<path d="M11.300 1.600 H0.600 V28.700 H20.800 V16.600" fill="none" stroke="#c2c2c2" stroke-width="1.100"/>
<g transform="translate(10.700 15.800) rotate(45)">
<rect x="-8.500" y="-3.600" width="17" height="7.200" fill="#f2f2f2"/>
<rect x="-6.500" y="-2.100" width="13" height="4.200" rx="0.800" fill="#f5f5f5" stroke="#bcbcbc" stroke-width="0.900"/><rect x="-4.600" y="-0.500" width="9.200" height="1" fill="#c2c2c2"/>
<rect x="-7.300" y="-8.200" width="14.600" height="2.600" fill="#b9b9b9"/>
<rect x="-7.300" y="-12.400" width="14.600" height="4.200" fill="#f1f1f1" stroke="#c2c2c2" stroke-width="0.900"/>
<path d="M-2.600 -12.400 L-3.600 -19.300 H3.600 L2.600 -12.400" fill="#f1f1f1" stroke="#c2c2c2" stroke-width="0.900"/></g></svg>
<div class="t" style="left:979.60px;top:117.61px;font-size:11.8px;line-height:20px;color:#b0b0b0;letter-spacing:-0.132px;">Sensitivity</div>
<svg style="left:1003.0px;top:141.8px" width="5.4" height="2.7"><path d="M0 0 L2.70 2.70 L5.40 0" fill="none" stroke="#b0b0b0" stroke-width="1"/></svg>
<div class="t" style="left:980.70px;top:157.52px;font-size:11.5px;line-height:20px;color:#3a3a3a;letter-spacing:-0.185px;">Sensitivity</div>
<div class="abs" style="left:1042px;top:83px;width:1px;height:89px;background:#d6d6d6"></div>
<svg style="left:1060px;top:87px" width="28" height="28"><rect x="0.500" y="0.500" width="27" height="27" fill="#fff" stroke="#d83b01" stroke-width="1"/>
<rect x="3.800" y="3.800" width="8.600" height="8.600" fill="none" stroke="#d83b01" stroke-width="1"/><rect x="15.600" y="3.800" width="8.600" height="8.600" fill="none" stroke="#d83b01" stroke-width="1"/>
<rect x="3.800" y="15.600" width="8.600" height="8.600" fill="none" stroke="#d83b01" stroke-width="1"/><rect x="15.600" y="15.600" width="8.600" height="8.600" fill="none" stroke="#d83b01" stroke-width="1"/></svg>
<div class="t" style="left:1053.50px;top:117.61px;font-size:11.8px;line-height:20px;color:#242424;letter-spacing:0.183px;">Add-ins</div>
<div class="t" style="left:1054.50px;top:157.52px;font-size:11.5px;line-height:20px;color:#3a3a3a;letter-spacing:-0.083px;">Add-ins</div>
<div class="abs" style="left:1105px;top:83px;width:1px;height:89px;background:#d6d6d6"></div>
<svg style="left:1123px;top:87px" width="28" height="28"><rect x="0.500" y="0.500" width="27" height="27" fill="#fafafa" stroke="#3b3b3b" stroke-width="1"/>
<rect x="1" y="1" width="26" height="2.800" fill="#c8c8c8"/>
<path d="M0.500 4 H27.500 M0.500 12 H27.500 M0.500 20 H27.500 M9.500 4 V27.500 M18.500 4 V27.500" stroke="#8a8a8a" stroke-width="0.800" fill="none"/>
<circle cx="13.200" cy="11.500" r="8.800" fill="#fff" stroke="#3b3b3b" stroke-width="1.100"/>
<rect x="8.600" y="11" width="3" height="4.500" fill="#c8c8c8" stroke="#3b3b3b" stroke-width="0.700"/><rect x="11.600" y="7" width="3" height="8.500" fill="#fff" stroke="#3b3b3b" stroke-width="0.700"/><rect x="14.600" y="8.800" width="3" height="6.700" fill="#2b88d8" stroke="#1e6fbf" stroke-width="0.700"/>
<path d="M19.500 17.800 L27.600 27.600" stroke="#3b3b3b" stroke-width="1.400"/></svg>
<div class="t" style="left:1116.60px;top:117.61px;font-size:11.8px;line-height:20px;color:#242424;letter-spacing:-0.250px;transform:scaleX(0.9901);transform-origin:0 0;">Analyze</div>
<div class="t" style="left:1126.00px;top:133.41px;font-size:11.8px;line-height:20px;color:#242424;letter-spacing:-0.250px;transform:scaleX(0.9155);transform-origin:0 0;">Data</div>
<div class="abs" style="left:1167px;top:83px;width:1px;height:89px;background:#d6d6d6"></div>
<svg style="left:1195.7px;top:161.6px" width="10.3" height="5.1"><path d="M0 0 L5.15 5.15 L10.30 0" fill="none" stroke="#3b3b3b" stroke-width="1.1"/></svg>
<div class="abs" style="left:8px;top:186px;width:102px;height:26px;border:1px solid #d6d6d6;border-radius:5px;background:#fff"></div>
<div class="t" style="left:15.20px;top:189.50px;font-size:13px;line-height:20px;color:#242424;letter-spacing:-0.250px;transform:scaleX(0.8832);transform-origin:0 0;">A1</div>
<svg style="left:94.0px;top:197.8px" width="9.7" height="4.9"><path d="M0 0 L4.85 4.85 L9.70 0" fill="none" stroke="#2b2b2b" stroke-width="1.2"/></svg>
<div class="abs" style="left:119px;top:194px;width:2px;height:2px;background:#2b2b2b;border-radius:0.5px"></div>
<div class="abs" style="left:119px;top:198px;width:2px;height:2px;background:#2b2b2b;border-radius:0.5px"></div>
<div class="abs" style="left:119px;top:202px;width:2px;height:2px;background:#2b2b2b;border-radius:0.5px"></div>
<div class="abs" style="left:130px;top:186px;width:86px;height:26px;border:1px solid #d6d6d6;border-radius:5px;background:#fff"></div>
<svg style="left:137px;top:193px" width="13" height="12"><path d="M0.500 0.300 L12 11.700 M12 0.300 L0.500 11.700" stroke="#b4b4b4" stroke-width="1.100"/></svg>
<svg style="left:159px;top:193px" width="16" height="11"><path d="M0.500 5.500 L5.500 10.400 L15.600 0.500" fill="none" stroke="#b4b4b4" stroke-width="1.100"/></svg>
<div class="t" style="left:184.500px;top:189px;font-family:'Liberation Serif',serif;font-style:italic;font-size:17px;line-height:20px;color:#2b2b2b;letter-spacing:0.6px;-webkit-text-stroke:0.4px #2b2b2b">fx</div>
<svg style="left:203.8px;top:197.3px" width="9.5" height="4.8"><path d="M0 0 L4.75 4.75 L9.50 0" fill="none" stroke="#7a7a7a" stroke-width="1.1"/></svg>
<div class="abs" style="left:220px;top:186px;width:995px;height:26px;border:1px solid #d6d6d6;border-radius:5px;background:#fff"></div>
<div class="t" style="left:231.60px;top:189.50px;font-size:13px;line-height:20px;color:#242424;letter-spacing:-0.242px;">Code</div>
<svg style="left:1200.5px;top:195.3px" width="10.0" height="5.0"><path d="M0 0 L5.00 5.00 L10.00 0" fill="none" stroke="#2b2b2b" stroke-width="1.2"/></svg>
<svg style="left:10px;top:223px" width="12" height="12"><path d="M12 0.500 V11.500 H0.500 Z" fill="#dedede"/></svg>
<div id="grid">
<div class="ch" style="left:27px;width:176px">A</div>
<div class="ch" style="left:204px;width:483px">B</div>
<div class="ch" style="left:688px;width:61px">C</div>
<div class="ch" style="left:750px;width:45px">D</div>
<div class="ch" style="left:796px;width:61px">E</div>
<div class="ch" style="left:858px;width:73px">F</div>
<div class="ch" style="left:932px;width:122px">G</div>
<div class="ch" style="left:1055px;width:66px">H</div>
<div class="ch" style="left:1122px;width:69px">I</div>
<div class="vl" style="left:203px"></div>
<div class="vh" style="left:203px"></div>
<div class="vl" style="left:687px"></div>
<div class="vh" style="left:687px"></div>
<div class="vl" style="left:749px"></div>
<div class="vh" style="left:749px"></div>
<div class="vl" style="left:795px"></div>
<div class="vh" style="left:795px"></div>
<div class="vl" style="left:857px"></div>
<div class="vh" style="left:857px"></div>
<div class="vl" style="left:931px"></div>
<div class="vh" style="left:931px"></div>
<div class="vl" style="left:1054px"></div>
<div class="vh" style="left:1054px"></div>
<div class="vl" style="left:1121px"></div>
<div class="vh" style="left:1121px"></div>
<div class="vl" style="left:1191px"></div>
<div class="vh" style="left:1191px"></div>
<div class="vl" style="left:26px;top:239px;height:496px;background:#b0b0b0"></div>
<div class="vh" style="left:26px;opacity:.5"></div>
<div class="hl" style="left:26px;top:239px;width:1176px;background:#b0b0b0"></div>
<div class="hh" style="top:239px;opacity:.5"></div>
<div class="rh" style="top:240px">1</div>
<div class="hl" style="top:259px"></div>
<div class="hh" style="top:259px"></div>
<div class="rh" style="top:260px">2</div>
<div class="hl" style="top:279px"></div>
<div class="hh" style="top:279px"></div>
<div class="rh" style="top:280px">3</div>
<div class="hl" style="top:299px"></div>
<div class="hh" style="top:299px"></div>
<div class="rh" style="top:300px">4</div>
<div class="hl" style="top:319px"></div>
<div class="hh" style="top:319px"></div>
<div class="rh" style="top:320px">5</div>
<div class="hl" style="top:339px"></div>
<div class="hh" style="top:339px"></div>
<div class="rh" style="top:340px">6</div>
<div class="hl" style="top:359px"></div>
<div class="hh" style="top:359px"></div>
<div class="rh" style="top:360px">7</div>
<div class="hl" style="top:379px"></div>
<div class="hh" style="top:379px"></div>
<div class="rh" style="top:380px">8</div>
<div class="hl" style="top:399px"></div>
<div class="hh" style="top:399px"></div>
<div class="rh" style="top:400px">9</div>
<div class="hl" style="top:419px"></div>
<div class="hh" style="top:419px"></div>
<div class="rh" style="top:420px">10</div>
<div class="hl" style="top:439px"></div>
<div class="hh" style="top:439px"></div>
<div class="rh" style="top:440px">11</div>
<div class="hl" style="top:459px"></div>
<div class="hh" style="top:459px"></div>
<div class="rh" style="top:460px">12</div>
<div class="hl" style="top:479px"></div>
<div class="hh" style="top:479px"></div>
<div class="rh" style="top:480px">13</div>
<div class="hl" style="top:499px"></div>
<div class="hh" style="top:499px"></div>
<div class="rh" style="top:500px">14</div>
<div class="hl" style="top:519px"></div>
<div class="hh" style="top:519px"></div>
<div class="rh" style="top:520px">15</div>
<div class="hl" style="top:539px"></div>
<div class="hh" style="top:539px"></div>
<div class="rh" style="top:540px">16</div>
<div class="hl" style="top:559px"></div>
<div class="hh" style="top:559px"></div>
<div class="rh" style="top:560px">17</div>
<div class="hl" style="top:579px"></div>
<div class="hh" style="top:579px"></div>
<div class="rh" style="top:580px">18</div>
<div class="hl" style="top:599px"></div>
<div class="hh" style="top:599px"></div>
<div class="rh" style="top:600px">19</div>
<div class="hl" style="top:619px"></div>
<div class="hh" style="top:619px"></div>
<div class="rh" style="top:620px">20</div>
<div class="hl" style="top:639px"></div>
<div class="hh" style="top:639px"></div>
<div class="rh" style="top:640px">21</div>
<div class="hl" style="top:659px"></div>
<div class="hh" style="top:659px"></div>
<div class="rh" style="top:660px">22</div>
<div class="hl" style="top:679px"></div>
<div class="hh" style="top:679px"></div>
<div class="rh" style="top:680px">23</div>
<div class="hl" style="top:699px"></div>
<div class="hh" style="top:699px"></div>
<div class="rh" style="top:700px">24</div>
<div class="hl" style="top:719px"></div>
<div class="hh" style="top:719px"></div>
<div class="rh" style="top:720px">25</div>
<div class="c al b" style="top:240px;left:27px;width:176px;letter-spacing:-0.409px"><span>Code</span></div>
<div class="c al b" style="top:240px;left:204px;width:483px;letter-spacing:-0.191px"><span>Designation</span></div>
<div class="c al b" style="top:240px;left:688px;width:61px;letter-spacing:-0.291px"><span>Category</span></div>
<div class="c al b" style="top:240px;left:750px;width:45px;letter-spacing:-0.339px"><span>Price</span></div>
<div class="c al b" style="top:240px;left:796px;width:61px;letter-spacing:-0.364px"><span>Currency</span></div>
<div class="c al b" style="top:240px;left:858px;width:73px;letter-spacing:-0.239px"><span>Price Type</span></div>
<div class="c al b" style="top:240px;left:932px;width:122px;letter-spacing:-0.179px"><span>Color Combination</span></div>
<div class="c al b" style="top:240px;left:1055px;width:66px;letter-spacing:-0.535px"><span>Thickness</span></div>
<div class="c al b" style="top:240px;left:1122px;width:69px;letter-spacing:-0.033px"><span>Extra Item</span></div>
<div class="c al b" style="top:240px;left:1192px;width:10px;overflow:hidden;padding-right:0"><span>G</span></div>
<div class="c al k0" style="top:260px;left:27px;width:176px;letter-spacing:-0.018px"><span>G - Special-Order</span></div>
<div class="c al k1" style="top:260px;left:204px;width:483px;letter-spacing:0.087px"><span>Special Product</span></div>
<div class="c ar k2" style="top:260px;left:688px;width:61px"><span>20</span></div>
<div class="c ar k3" style="top:260px;left:750px;width:45px"><span>0</span></div>
<div class="c al k4" style="top:260px;left:796px;width:61px"><span>AUD</span></div>
<div class="c al k5" style="top:260px;left:858px;width:73px"><span>PerSurface</span></div>
<div class="c ar k6" style="top:260px;left:932px;width:122px"><span>5470</span></div>
<div class="c ar k7" style="top:260px;left:1055px;width:66px"><span>0</span></div>
<div class="c ac k8" style="top:260px;left:1122px;width:69px"><span>FALSE</span></div>
<div class="c al k0" style="top:280px;left:27px;width:176px;letter-spacing:-0.092px"><span>G-10-Pl</span></div>
<div class="c al k1" style="top:280px;left:204px;width:483px;letter-spacing:0.065px"><span>10mm Planibel Single Glazed</span></div>
<div class="c ar k2" style="top:280px;left:688px;width:61px"><span>20</span></div>
<div class="c ar k3" style="top:280px;left:750px;width:45px"><span>201,2</span></div>
<div class="c al k4" style="top:280px;left:796px;width:61px"><span>AUD</span></div>
<div class="c al k5" style="top:280px;left:858px;width:73px"><span>PerSurface</span></div>
<div class="c ar k6" style="top:280px;left:932px;width:122px"><span>5470</span></div>
<div class="c ar k7" style="top:280px;left:1055px;width:66px"><span>10</span></div>
<div class="c ac k8" style="top:280px;left:1122px;width:69px"><span>FALSE</span></div>
<div class="c al k0" style="top:300px;left:27px;width:176px;letter-spacing:-0.282px"><span>G-4CT-18A-4CT-26</span></div>
<div class="c al k1" style="top:300px;left:204px;width:483px;letter-spacing:0.228px"><span>4mm Clear Tough / 18 Argon / 4mm Clear Tough</span></div>
<div class="c ar k2" style="top:300px;left:688px;width:61px"><span>20</span></div>
<div class="c ar k3" style="top:300px;left:750px;width:45px"><span>123,7</span></div>
<div class="c al k4" style="top:300px;left:796px;width:61px"><span>AUD</span></div>
<div class="c al k5" style="top:300px;left:858px;width:73px"><span>PerSurface</span></div>
<div class="c ar k6" style="top:300px;left:932px;width:122px"><span>5470</span></div>
<div class="c ar k7" style="top:300px;left:1055px;width:66px"><span>26</span></div>
<div class="c ac k8" style="top:300px;left:1122px;width:69px"><span>FALSE</span></div>
<div class="c al k0" style="top:320px;left:27px;width:176px;letter-spacing:-0.282px"><span>G-5CT-16A-5CT-26</span></div>
<div class="c al k1" style="top:320px;left:204px;width:483px;letter-spacing:0.228px"><span>5mm Clear Tough / 16 Argon / 5mm Clear Tough</span></div>
<div class="c ar k2" style="top:320px;left:688px;width:61px"><span>20</span></div>
<div class="c ar k3" style="top:320px;left:750px;width:45px"><span>128,4</span></div>
<div class="c al k4" style="top:320px;left:796px;width:61px"><span>AUD</span></div>
<div class="c al k5" style="top:320px;left:858px;width:73px"><span>PerSurface</span></div>
<div class="c ar k6" style="top:320px;left:932px;width:122px"><span>5470</span></div>
<div class="c ar k7" style="top:320px;left:1055px;width:66px"><span>26</span></div>
<div class="c ac k8" style="top:320px;left:1122px;width:69px"><span>FALSE</span></div>
<div class="c al k0" style="top:340px;left:27px;width:176px;letter-spacing:-0.282px"><span>G-6CT-14A-6CT-26</span></div>
<div class="c al k1" style="top:340px;left:204px;width:483px;letter-spacing:0.228px"><span>6mm Clear Tough / 14 Argon / 6mm Clear Tough</span></div>
<div class="c ar k2" style="top:340px;left:688px;width:61px"><span>20</span></div>
<div class="c ar k3" style="top:340px;left:750px;width:45px"><span>147,8</span></div>
<div class="c al k4" style="top:340px;left:796px;width:61px"><span>AUD</span></div>
<div class="c al k5" style="top:340px;left:858px;width:73px"><span>PerSurface</span></div>
<div class="c ar k6" style="top:340px;left:932px;width:122px"><span>5470</span></div>
<div class="c ar k7" style="top:340px;left:1055px;width:66px"><span>26</span></div>
<div class="c ac k8" style="top:340px;left:1122px;width:69px"><span>FALSE</span></div>
<div class="c al k0" style="top:360px;left:27px;width:176px;letter-spacing:-0.282px"><span>G-8CT-10A-8CT-26</span></div>
<div class="c al k1" style="top:360px;left:204px;width:483px;letter-spacing:0.228px"><span>8mm Clear Tough / 10 Argon / 8mm Clear Tough</span></div>
<div class="c ar k2" style="top:360px;left:688px;width:61px"><span>20</span></div>
<div class="c ar k3" style="top:360px;left:750px;width:45px"><span>318,1</span></div>
<div class="c al k4" style="top:360px;left:796px;width:61px"><span>AUD</span></div>
<div class="c al k5" style="top:360px;left:858px;width:73px"><span>PerSurface</span></div>
<div class="c ar k6" style="top:360px;left:932px;width:122px"><span>5470</span></div>
<div class="c ar k7" style="top:360px;left:1055px;width:66px"><span>26</span></div>
<div class="c ac k8" style="top:360px;left:1122px;width:69px"><span>FALSE</span></div>
<div class="c al k0" style="top:380px;left:27px;width:176px;letter-spacing:-0.339px"><span>G-4CT-18A-4CLT-26</span></div>
<div class="c al k1" style="top:380px;left:204px;width:483px;letter-spacing:0.169px"><span>4mm Clear Tough / 18 Argon / 4mm Insulglass LowE Prime</span></div>
<div class="c ar k2" style="top:380px;left:688px;width:61px"><span>20</span></div>
<div class="c ar k3" style="top:380px;left:750px;width:45px"><span>136,2</span></div>
<div class="c al k4" style="top:380px;left:796px;width:61px"><span>AUD</span></div>
<div class="c al k5" style="top:380px;left:858px;width:73px"><span>PerSurface</span></div>
<div class="c ar k6" style="top:380px;left:932px;width:122px"><span>5470</span></div>
<div class="c ar k7" style="top:380px;left:1055px;width:66px"><span>26</span></div>
<div class="c ac k8" style="top:380px;left:1122px;width:69px"><span>FALSE</span></div>
<div class="c al k0" style="top:400px;left:27px;width:176px;letter-spacing:-0.339px"><span>G-5CT-16A-5CLT-26</span></div>
<div class="c al k1" style="top:400px;left:204px;width:483px;letter-spacing:0.169px"><span>5mm Clear Tough / 16 Argon / 5mm Insulglass LowE Prime</span></div>
<div class="c ar k2" style="top:400px;left:688px;width:61px"><span>20</span></div>
<div class="c ar k3" style="top:400px;left:750px;width:45px"><span>166,7</span></div>
<div class="c al k4" style="top:400px;left:796px;width:61px"><span>AUD</span></div>
<div class="c al k5" style="top:400px;left:858px;width:73px"><span>PerSurface</span></div>
<div class="c ar k6" style="top:400px;left:932px;width:122px"><span>5470</span></div>
<div class="c ar k7" style="top:400px;left:1055px;width:66px"><span>26</span></div>
<div class="c ac k8" style="top:400px;left:1122px;width:69px"><span>FALSE</span></div>
<div class="c al k0" style="top:420px;left:27px;width:176px;letter-spacing:-0.339px"><span>G-6CT-14A-6CLT-26</span></div>
<div class="c al k1" style="top:420px;left:204px;width:483px;letter-spacing:0.169px"><span>6mm Clear Tough / 14 Argon / 6mm Insulglass LowE Prime</span></div>
<div class="c ar k2" style="top:420px;left:688px;width:61px"><span>20</span></div>
<div class="c ar k3" style="top:420px;left:750px;width:45px"><span>222,2</span></div>
<div class="c al k4" style="top:420px;left:796px;width:61px"><span>AUD</span></div>
<div class="c al k5" style="top:420px;left:858px;width:73px"><span>PerSurface</span></div>
<div class="c ar k6" style="top:420px;left:932px;width:122px"><span>5470</span></div>
<div class="c ar k7" style="top:420px;left:1055px;width:66px"><span>26</span></div>
<div class="c ac k8" style="top:420px;left:1122px;width:69px"><span>FALSE</span></div>
<div class="c al k0" style="top:440px;left:27px;width:176px;letter-spacing:-0.339px"><span>G-8CT-10A-8CLT-26</span></div>
<div class="c al k1" style="top:440px;left:204px;width:483px;letter-spacing:0.169px"><span>8mm Clear Tough / 10 Argon / 8mm Insulglass LowE Prime</span></div>
<div class="c ar k2" style="top:440px;left:688px;width:61px"><span>20</span></div>
<div class="c ar k3" style="top:440px;left:750px;width:45px"><span>409,6</span></div>
<div class="c al k4" style="top:440px;left:796px;width:61px"><span>AUD</span></div>
<div class="c al k5" style="top:440px;left:858px;width:73px"><span>PerSurface</span></div>
<div class="c ar k6" style="top:440px;left:932px;width:122px"><span>5470</span></div>
<div class="c ar k7" style="top:440px;left:1055px;width:66px"><span>26</span></div>
<div class="c ac k8" style="top:440px;left:1122px;width:69px"><span>FALSE</span></div>
<div class="c al k0" style="top:460px;left:27px;width:176px;letter-spacing:-0.338px"><span>G-4CT-18A-4CPT-26</span></div>
<div class="c al k1" style="top:460px;left:204px;width:483px;letter-spacing:0.162px"><span>4mm Clear Tough / 18 Argon / 4mm Insulglass Plus Tough</span></div>
<div class="c ar k2" style="top:460px;left:688px;width:61px"><span>20</span></div>
<div class="c ar k3" style="top:460px;left:750px;width:45px"><span>136,2</span></div>
<div class="c al k4" style="top:460px;left:796px;width:61px"><span>AUD</span></div>
<div class="c al k5" style="top:460px;left:858px;width:73px"><span>PerSurface</span></div>
<div class="c ar k6" style="top:460px;left:932px;width:122px"><span>5470</span></div>
<div class="c ar k7" style="top:460px;left:1055px;width:66px"><span>26</span></div>
<div class="c ac k8" style="top:460px;left:1122px;width:69px"><span>FALSE</span></div>
<div class="c al k0" style="top:480px;left:27px;width:176px;letter-spacing:-0.338px"><span>G-5CT-16A-5CPT-26</span></div>
<div class="c al k1" style="top:480px;left:204px;width:483px;letter-spacing:0.162px"><span>5mm Clear Tough / 16 Argon / 5mm Insulglass Plus Tough</span></div>
<div class="c ar k2" style="top:480px;left:688px;width:61px"><span>20</span></div>
<div class="c ar k3" style="top:480px;left:750px;width:45px"><span>166,7</span></div>
<div class="c al k4" style="top:480px;left:796px;width:61px"><span>AUD</span></div>
<div class="c al k5" style="top:480px;left:858px;width:73px"><span>PerSurface</span></div>
<div class="c ar k6" style="top:480px;left:932px;width:122px"><span>5470</span></div>
<div class="c ar k7" style="top:480px;left:1055px;width:66px"><span>26</span></div>
<div class="c ac k8" style="top:480px;left:1122px;width:69px"><span>FALSE</span></div>
<div class="c al k0" style="top:500px;left:27px;width:176px;letter-spacing:-0.338px"><span>G-6CT-14A-6CPT-26</span></div>
<div class="c al k1" style="top:500px;left:204px;width:483px;letter-spacing:0.162px"><span>6mm Clear Tough / 14 Argon / 6mm Insulglass Plus Tough</span></div>
<div class="c ar k2" style="top:500px;left:688px;width:61px"><span>20</span></div>
<div class="c ar k3" style="top:500px;left:750px;width:45px"><span>222,2</span></div>
<div class="c al k4" style="top:500px;left:796px;width:61px"><span>AUD</span></div>
<div class="c al k5" style="top:500px;left:858px;width:73px"><span>PerSurface</span></div>
<div class="c ar k6" style="top:500px;left:932px;width:122px"><span>5470</span></div>
<div class="c ar k7" style="top:500px;left:1055px;width:66px"><span>26</span></div>
<div class="c ac k8" style="top:500px;left:1122px;width:69px"><span>FALSE</span></div>
<div class="c al k0" style="top:520px;left:27px;width:176px;letter-spacing:-0.338px"><span>G-8CT-10A-8CPT-26</span></div>
<div class="c al k1" style="top:520px;left:204px;width:483px;letter-spacing:0.162px"><span>8mm Clear Tough / 10 Argon / 8mm Insulglass Plus Tough</span></div>
<div class="c ar k2" style="top:520px;left:688px;width:61px"><span>20</span></div>
<div class="c ar k3" style="top:520px;left:750px;width:45px"><span>409,6</span></div>
<div class="c al k4" style="top:520px;left:796px;width:61px"><span>AUD</span></div>
<div class="c al k5" style="top:520px;left:858px;width:73px"><span>PerSurface</span></div>
<div class="c ar k6" style="top:520px;left:932px;width:122px"><span>5470</span></div>
<div class="c ar k7" style="top:520px;left:1055px;width:66px"><span>26</span></div>
<div class="c ac k8" style="top:520px;left:1122px;width:69px"><span>FALSE</span></div>
<div class="c al k0" style="top:540px;left:27px;width:176px;letter-spacing:-0.153px"><span>G-4TC-16A-6CLM-26</span></div>
<div class="c al k1" style="top:540px;left:204px;width:483px;letter-spacing:0.176px"><span>4mm Clear Tough / 16 Argon / 6mm Insulglass LowE Max</span></div>
<div class="c ar k2" style="top:540px;left:688px;width:61px"><span>20</span></div>
<div class="c ar k3" style="top:540px;left:750px;width:45px"><span>251,7</span></div>
<div class="c al k4" style="top:540px;left:796px;width:61px"><span>AUD</span></div>
<div class="c al k5" style="top:540px;left:858px;width:73px"><span>PerSurface</span></div>
<div class="c ar k6" style="top:540px;left:932px;width:122px"><span>5470</span></div>
<div class="c ar k7" style="top:540px;left:1055px;width:66px"><span>26</span></div>
<div class="c ac k8" style="top:540px;left:1122px;width:69px"><span>FALSE</span></div>
<div class="c al k0" style="top:560px;left:27px;width:176px;letter-spacing:-0.153px"><span>G-6TC-14A-6CLM-26</span></div>
<div class="c al k1" style="top:560px;left:204px;width:483px;letter-spacing:0.176px"><span>6mm Clear Tough / 14 Argon / 6mm Insulglass LowE Max</span></div>
<div class="c ar k2" style="top:560px;left:688px;width:61px"><span>20</span></div>
<div class="c ar k3" style="top:560px;left:750px;width:45px"><span>267</span></div>
<div class="c al k4" style="top:560px;left:796px;width:61px"><span>AUD</span></div>
<div class="c al k5" style="top:560px;left:858px;width:73px"><span>PerSurface</span></div>
<div class="c ar k6" style="top:560px;left:932px;width:122px"><span>5470</span></div>
<div class="c ar k7" style="top:560px;left:1055px;width:66px"><span>26</span></div>
<div class="c ac k8" style="top:560px;left:1122px;width:69px"><span>FALSE</span></div>
<div class="c al k0" style="top:580px;left:27px;width:176px;letter-spacing:-0.378px"><span>G-4GRYT-18A-4CT-26</span></div>
<div class="c al k1" style="top:580px;left:204px;width:483px;letter-spacing:0.240px"><span>4mm Grey Tough / 18 Argon / 4mm Clear Tough</span></div>
<div class="c ar k2" style="top:580px;left:688px;width:61px"><span>20</span></div>
<div class="c ar k3" style="top:580px;left:750px;width:45px"><span>136,2</span></div>
<div class="c al k4" style="top:580px;left:796px;width:61px"><span>AUD</span></div>
<div class="c al k5" style="top:580px;left:858px;width:73px"><span>PerSurface</span></div>
<div class="c ar k6" style="top:580px;left:932px;width:122px"><span>5470</span></div>
<div class="c ar k7" style="top:580px;left:1055px;width:66px"><span>26</span></div>
<div class="c ac k8" style="top:580px;left:1122px;width:69px"><span>FALSE</span></div>
<div class="c al k0" style="top:600px;left:27px;width:176px;letter-spacing:-0.378px"><span>G-5GRYT-16A-5CT-26</span></div>
<div class="c al k1" style="top:600px;left:204px;width:483px;letter-spacing:0.240px"><span>5mm Grey Tough / 16 Argon / 5mm Clear Tough</span></div>
<div class="c ar k2" style="top:600px;left:688px;width:61px"><span>20</span></div>
<div class="c ar k3" style="top:600px;left:750px;width:45px"><span>139,8</span></div>
<div class="c al k4" style="top:600px;left:796px;width:61px"><span>AUD</span></div>
<div class="c al k5" style="top:600px;left:858px;width:73px"><span>PerSurface</span></div>
<div class="c ar k6" style="top:600px;left:932px;width:122px"><span>5470</span></div>
<div class="c ar k7" style="top:600px;left:1055px;width:66px"><span>26</span></div>
<div class="c ac k8" style="top:600px;left:1122px;width:69px"><span>FALSE</span></div>
<div class="c al k0" style="top:620px;left:27px;width:176px;letter-spacing:-0.378px"><span>G-6GRYT-14A-6CT-26</span></div>
<div class="c al k1" style="top:620px;left:204px;width:483px;letter-spacing:0.240px"><span>6mm Grey Tough / 14 Argon / 6mm Clear Tough</span></div>
<div class="c ar k2" style="top:620px;left:688px;width:61px"><span>20</span></div>
<div class="c ar k3" style="top:620px;left:750px;width:45px"><span>162,2</span></div>
<div class="c al k4" style="top:620px;left:796px;width:61px"><span>AUD</span></div>
<div class="c al k5" style="top:620px;left:858px;width:73px"><span>PerSurface</span></div>
<div class="c ar k6" style="top:620px;left:932px;width:122px"><span>5470</span></div>
<div class="c ar k7" style="top:620px;left:1055px;width:66px"><span>26</span></div>
<div class="c ac k8" style="top:620px;left:1122px;width:69px"><span>FALSE</span></div>
<div class="c al k0" style="top:640px;left:27px;width:176px;letter-spacing:-0.424px"><span>G-4GRYT-18A-4CLT-26</span></div>
<div class="c al k1" style="top:640px;left:204px;width:483px;letter-spacing:0.177px"><span>4mm Grey Tough / 18 Argon / 4mm Insulglass LowE Prime</span></div>
<div class="c ar k2" style="top:640px;left:688px;width:61px"><span>20</span></div>
<div class="c ar k3" style="top:640px;left:750px;width:45px"><span>145,8</span></div>
<div class="c al k4" style="top:640px;left:796px;width:61px"><span>AUD</span></div>
<div class="c al k5" style="top:640px;left:858px;width:73px"><span>PerSurface</span></div>
<div class="c ar k6" style="top:640px;left:932px;width:122px"><span>5470</span></div>
<div class="c ar k7" style="top:640px;left:1055px;width:66px"><span>26</span></div>
<div class="c ac k8" style="top:640px;left:1122px;width:69px"><span>FALSE</span></div>
<div class="c al k0" style="top:660px;left:27px;width:176px;letter-spacing:-0.424px"><span>G-5GRYT-16A-5CLT-26</span></div>
<div class="c al k1" style="top:660px;left:204px;width:483px;letter-spacing:0.177px"><span>5mm Grey Tough / 16 Argon / 5mm Insulglass LowE Prime</span></div>
<div class="c ar k2" style="top:660px;left:688px;width:61px"><span>20</span></div>
<div class="c ar k3" style="top:660px;left:750px;width:45px"><span>179,2</span></div>
<div class="c al k4" style="top:660px;left:796px;width:61px"><span>AUD</span></div>
<div class="c al k5" style="top:660px;left:858px;width:73px"><span>PerSurface</span></div>
<div class="c ar k6" style="top:660px;left:932px;width:122px"><span>5470</span></div>
<div class="c ar k7" style="top:660px;left:1055px;width:66px"><span>26</span></div>
<div class="c ac k8" style="top:660px;left:1122px;width:69px"><span>FALSE</span></div>
<div class="c al k0" style="top:680px;left:27px;width:176px;letter-spacing:-0.424px"><span>G-6GRYT-14A-6CLT-26</span></div>
<div class="c al k1" style="top:680px;left:204px;width:483px;letter-spacing:0.177px"><span>6mm Grey Tough / 14 Argon / 6mm Insulglass LowE Prime</span></div>
<div class="c ar k2" style="top:680px;left:688px;width:61px"><span>20</span></div>
<div class="c ar k3" style="top:680px;left:750px;width:45px"><span>243,1</span></div>
<div class="c al k4" style="top:680px;left:796px;width:61px"><span>AUD</span></div>
<div class="c al k5" style="top:680px;left:858px;width:73px"><span>PerSurface</span></div>
<div class="c ar k6" style="top:680px;left:932px;width:122px"><span>5470</span></div>
<div class="c ar k7" style="top:680px;left:1055px;width:66px"><span>26</span></div>
<div class="c ac k8" style="top:680px;left:1122px;width:69px"><span>FALSE</span></div>
<div class="c al k0" style="top:700px;left:27px;width:176px;letter-spacing:-0.422px"><span>G-4GRYT-18A-4CPT-26</span></div>
<div class="c al k1" style="top:700px;left:204px;width:483px;letter-spacing:0.171px"><span>4mm Grey Tough / 18 Argon / 4mm Insulglass Plus Tough</span></div>
<div class="c ar k2" style="top:700px;left:688px;width:61px"><span>20</span></div>
<div class="c ar k3" style="top:700px;left:750px;width:45px"><span>145,8</span></div>
<div class="c al k4" style="top:700px;left:796px;width:61px"><span>AUD</span></div>
<div class="c al k5" style="top:700px;left:858px;width:73px"><span>PerSurface</span></div>
<div class="c ar k6" style="top:700px;left:932px;width:122px"><span>5470</span></div>
<div class="c ar k7" style="top:700px;left:1055px;width:66px"><span>26</span></div>
<div class="c ac k8" style="top:700px;left:1122px;width:69px"><span>FALSE</span></div>
<div class="c al k0" style="top:720px;left:27px;width:176px;letter-spacing:-0.422px"><span>G-5GRYT-16A-5CPT-26</span></div>
<div class="c al k1" style="top:720px;left:204px;width:483px;letter-spacing:0.171px"><span>5mm Grey Tough / 16 Argon / 5mm Insulglass Plus Tough</span></div>
<div class="c ar k2" style="top:720px;left:688px;width:61px"><span>20</span></div>
<div class="c ar k3" style="top:720px;left:750px;width:45px"><span>179,2</span></div>
<div class="c al k4" style="top:720px;left:796px;width:61px"><span>AUD</span></div>
<div class="c al k5" style="top:720px;left:858px;width:73px"><span>PerSurface</span></div>
<div class="c ar k6" style="top:720px;left:932px;width:122px"><span>5470</span></div>
<div class="c ar k7" style="top:720px;left:1055px;width:66px"><span>26</span></div>
<div class="c ac k8" style="top:720px;left:1122px;width:69px"><span>FALSE</span></div>
<div id="thick"></div>
</div>
<div class="abs" style="left:1201px;top:220px;width:22px;height:515px;background:#f0f0f0"></div>
<div class="abs" style="left:1204px;top:219px;width:17px;height:522px;background:#f6f6f6;border-radius:8px"></div>
<svg style="left:1208px;top:224px" width="9" height="7"><path d="M4.500 0.600 L8.500 6 H0.500 Z" fill="#777" stroke="#777" stroke-width="1" stroke-linejoin="round"/></svg>
<div class="abs" style="left:1208px;top:236px;width:9px;height:16.5px;background:#777;border-radius:4.500px"></div>
<svg style="left:1208px;top:725px" width="9" height="7"><path d="M4.500 6.400 L8.500 1 H0.500 Z" fill="#777" stroke="#777" stroke-width="1" stroke-linejoin="round"/></svg>
<div class="abs" style="left:0px;top:734px;width:1223px;height:32px;background:#f0f0f0"></div>
<div class="abs" style="left:112px;top:734px;width:66px;height:6px;background:#fff"></div>
<div class="abs" style="left:104px;top:734px;width:12px;height:12px;background:#f0f0f0;border-top-right-radius:5px"></div>
<div class="abs" style="left:174px;top:734px;width:12px;height:12px;background:#f0f0f0;border-top-left-radius:5px"></div>
<div class="abs" style="left:116px;top:734px;width:58px;height:28px;background:#fff;border-radius:0 0 5px 5px;box-shadow:0 0.500px 1.500px rgba(0,0,0,.18)"></div>
<div class="t" style="left:124.50px;top:737.50px;font-size:13px;line-height:20px;color:#1f1f1f;letter-spacing:-0.250px;transform:scaleX(0.9692);transform-origin:0 0;font-weight:bold;">Sheet1</div>
<div class="abs" style="left:124px;top:757px;width:41px;height:2px;background:#107c41;border-radius:1px"></div>
<svg style="left:28px;top:744px" width="8" height="11"><path d="M7 0.500 L1 5.300 L7 10" fill="none" stroke="#a8a8a8" stroke-width="1.200"/></svg>
<svg style="left:61px;top:744px" width="8" height="11"><path d="M0.800 0.500 L6.800 5.300 L0.800 10" fill="none" stroke="#a8a8a8" stroke-width="1.200"/></svg>
<div class="abs" style="left:177px;top:741px;width:1px;height:18px;background:#c8c8c8"></div>
<svg style="left:220px;top:744px" width="11" height="11"><path d="M5.500 0.200 V10.800 M0.200 5.500 H10.800" stroke="#3b3b3b" stroke-width="1.100"/></svg>
<div class="abs" style="left:736.2px;top:746px;width:1.7999999999999545px;height:1.7999999999999545px;background:#3b3b3b;border-radius:1px"></div>
<div class="abs" style="left:736.2px;top:750px;width:1.7999999999999545px;height:1.7999999999999545px;background:#3b3b3b;border-radius:1px"></div>
<div class="abs" style="left:736.2px;top:754px;width:1.7999999999999545px;height:1.7999999999999545px;background:#3b3b3b;border-radius:1px"></div>
<div class="abs" style="left:753px;top:742px;width:452px;height:16px;background:#f5f5f5;border-radius:8px"></div>
<svg style="left:758px;top:745px" width="7" height="9"><path d="M0.200 4.500 L6.800 0.200 V8.800 Z" fill="#707070"/></svg>
<div class="abs" style="left:770px;top:745px;width:106px;height:9px;background:#737373;border-radius:4.500px"></div>
<svg style="left:1192px;top:745px" width="7" height="9"><path d="M6.800 4.500 L0.200 0.200 V8.800 Z" fill="#707070"/></svg>
<div class="abs" style="left:0px;top:766px;width:1223px;height:1px;background:#fff"></div>
<div class="abs" style="left:0px;top:767px;width:1223px;height:22px;background:#f4f4f4"></div>
<div class="t" style="left:11.80px;top:767.32px;font-size:11.2px;line-height:20px;color:#3a3a3a;letter-spacing:-0.250px;transform:scaleX(0.9498);transform-origin:0 0;">Ready</div>
<svg style="left:62px;top:771px" width="15" height="13"><path d="M0.500 12 V0.500 H13.500 V4.500 M0.500 3 H13.500 M0.500 12 H5.500" fill="none" stroke="#3b3b3b" stroke-width="1"/>
<path d="M2.500 5.500 H6 M2.500 7.800 H5 M2.500 10 H5" stroke="#3b3b3b" stroke-width="0.900"/>
<circle cx="10" cy="8.700" r="3.800" fill="#f4f4f4" stroke="#3b3b3b" stroke-width="1"/><circle cx="10" cy="8.700" r="1.700" fill="#3b3b3b"/></svg>
<svg style="left:94px;top:769px" width="15" height="15"><circle cx="6.500" cy="2.200" r="1.700" fill="none" stroke="#3b3b3b" stroke-width="1"/>
<path d="M1 4.500 C2.500 5.800 4 6 4.800 6.200 V9 L3 14 M12 4.500 C10.500 5.800 9 6 8.200 6.200 V8" fill="none" stroke="#3b3b3b" stroke-width="1" stroke-linecap="round"/>
<path d="M6.800 11.800 L9 14 L14 9" fill="none" stroke="#3b3b3b" stroke-width="1.100"/></svg>
<div class="t" style="left:111.80px;top:767.32px;font-size:11.2px;line-height:20px;color:#3a3a3a;letter-spacing:0.116px;">Accessibility: Good to go</div>
<svg style="left:791px;top:771px" width="14" height="13"><path d="M5.500 8.500 H0.500 V0.500 H12.500 V4" fill="none" stroke="#3b3b3b" stroke-width="1"/>
<circle cx="9.800" cy="8.800" r="2.500" fill="none" stroke="#3b3b3b" stroke-width="1.100"/><circle cx="9.800" cy="8.800" r="3.900" fill="none" stroke="#3b3b3b" stroke-width="1.300" stroke-dasharray="1.500 1.560"/></svg>
<div class="t" style="left:809.00px;top:767.32px;font-size:11.2px;line-height:20px;color:#3a3a3a;letter-spacing:-0.030px;">Display Settings</div>
<div class="abs" style="left:909px;top:767px;width:40px;height:22px;background:#dadada"></div>
<svg style="left:922px;top:770px" width="13" height="13"><path d="M0.500 0.500 H12.500 V12.500 H0.500 Z M4.500 0.500 V12.500 M8.500 0.500 V12.500 M0.500 4.500 H12.500 M0.500 8.500 H12.500" fill="none" stroke="#3b3b3b" stroke-width="1"/></svg>
<svg style="left:962px;top:771px" width="14" height="12"><rect x="0.500" y="0.500" width="13" height="11" fill="none" stroke="#3b3b3b" stroke-width="1"/><rect x="3.500" y="2.500" width="7" height="7" fill="none" stroke="#3b3b3b" stroke-width="1"/><path d="M5 4.500 H9 M5 6 H9 M5 7.500 H9" stroke="#3b3b3b" stroke-width="0.700"/></svg>
<svg style="left:1001px;top:771px" width="15" height="12"><path d="M0.500 0.500 H14.500 V11.500 H0.500 Z M5.500 0.500 V6.500 H0.500 M5.500 6.500 H11 V0.500" fill="none" stroke="#3b3b3b" stroke-width="1"/></svg>
<div class="abs" style="left:1036px;top:777px;width:7px;height:1px;background:#3b3b3b"></div>
<div class="abs" style="left:1048px;top:777px;width:100px;height:1px;background:#6a6a6a"></div>
<div class="abs" style="left:1096px;top:771.5px;width:5px;height:11.5px;background:#555;border-radius:1px"></div>
<svg style="left:1153px;top:774px" width="7" height="7"><path d="M3.500 0 V7 M0 3.500 H7" stroke="#3b3b3b" stroke-width="1"/></svg>
<div class="t" style="left:1175.00px;top:767.32px;font-size:11.2px;line-height:20px;color:#3a3a3a;letter-spacing:-0.250px;transform:scaleX(0.9106);transform-origin:0 0;">100 %</div>
</div></body></html>
